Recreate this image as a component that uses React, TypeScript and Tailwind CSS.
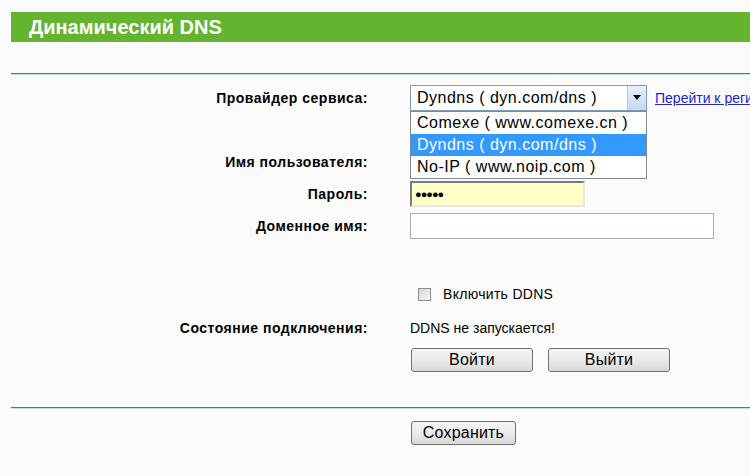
const font = { fontFamily: '"Liberation Sans", Arial, sans-serif' };

const Label = ({ children }: { children: React.ReactNode }) => (
  <div className="w-[368px] shrink-0 text-right text-[14px] font-bold tracking-[0.5px] text-black">{children}</div>
);

const GrayButton = ({ children, className }: { children: React.ReactNode; className?: string }) => (
  <button className={`h-[24px] shrink-0 rounded-[3px] border border-[#707070] bg-gradient-to-b from-[#f4f4f4] via-[#ebebeb] to-[#d8d8d8] text-[16px] leading-none tracking-[0.2px] text-black ${className ?? ""}`}>
    {children}
  </button>
);

const App = () => {
  return (
    <div style={font} className="relative h-[476px] w-[750px] overflow-hidden bg-[#fbfbfb] pt-[12px]">
      {/* Header */}
      <div className="ml-[11px] h-[30px] bg-[#64b42f] pl-[18px] text-[20px] font-bold leading-[30px] text-white">
        Динамический DNS
      </div>
      <div className="ml-[11px] mt-[31px] h-[2px] border-t border-[#4f7f6d] border-b border-b-[#bfe8d6]" />

      {/* Provider */}
      <div className="mt-[10px] flex h-[26px] items-center">
        <Label>Провайдер сервиса:</Label>
        <div className="relative ml-[42px] flex h-[26px] w-[237px] shrink-0 items-center border border-[#7f9db9] bg-white">
          <span className="pl-[6px] text-[16px] tracking-[0.5px] text-black">Dyndns ( dyn.com/dns )</span>
          <div className="absolute right-0 top-0 flex h-[24px] w-[19px] items-start justify-center border-l border-[#b7cce6] bg-gradient-to-b from-[#e8f0fb] to-[#c4d8f0] pt-[9px]">
            <svg width="8" height="5" viewBox="0 0 8 5">
              <path d="M0 0 H8 L4 5 Z" fill="#000" />
            </svg>
          </div>
          {/* open list */}
          <div className="absolute left-[-1px] top-[25px] z-10 w-[237px] border border-[#7a8a9c] bg-white text-[16px] leading-[22px] tracking-[0.5px]">
            <div className="pl-[6px] text-black">Comexe ( www.comexe.cn )</div>
            <div className="bg-[#3399ff] pl-[6px] text-white">Dyndns ( dyn.com/dns )</div>
            <div className="pl-[6px] text-black">No-IP ( www.noip.com )</div>
          </div>
        </div>
        <a className="ml-[8px] shrink-0 whitespace-nowrap text-[14px] text-[#2424cc] underline">Перейти к регистрации...</a>
      </div>

      {/* Username */}
      <div className="mt-[38px] flex h-[26px] items-center">
        <Label>Имя пользователя:</Label>
        <div className="ml-[42px] h-[26px] w-[175px] shrink-0 border border-[#a5acb5] bg-white" />
      </div>

      {/* Password */}
      <div className="mt-[6px] flex h-[26px] items-center">
        <Label>Пароль:</Label>
        <div className="ml-[42px] flex h-[26px] w-[175px] shrink-0 items-center border-2 border-t-[#7a7a7a] border-l-[#7a7a7a] border-r-[#e6e6e6] border-b-[#e6e6e6] bg-[#ffffc8] pl-[3px] text-[11px] font-bold tracking-[-1px] text-black">
          ●●●●●
        </div>
      </div>

      {/* Domain */}
      <div className="mt-[6px] flex h-[26px] items-center">
        <Label>Доменное имя:</Label>
        <div className="ml-[42px] h-[26px] w-[304px] shrink-0 border border-[#a5acb5] bg-white" />
      </div>

      {/* Enable */}
      <div className="mt-[45px] flex h-[20px] items-center">
        <div className="w-[368px] shrink-0" />
        <div className="ml-[50px] h-[13px] w-[13px] shrink-0 border border-[#8f8f8f] bg-gradient-to-br from-[#d4d4d4] to-[#f8f8f8]" />
        <span className="ml-[12px] text-[14px] tracking-[0.3px] text-black">Включить DDNS</span>
      </div>

      {/* Status */}
      <div className="mt-[14px] flex h-[20px] items-center">
        <Label>Состояние подключения:</Label>
        <span className="ml-[42px] text-[14px] text-black">DDNS не запускается!</span>
      </div>

      {/* Login / logout */}
      <div className="mt-[10px] flex items-center">
        <div className="w-[368px] shrink-0" />
        <GrayButton className="ml-[43px] w-[122px]">Войти</GrayButton>
        <GrayButton className="ml-[15px] w-[122px]">Выйти</GrayButton>
      </div>

      <div className="ml-[11px] mt-[35px] h-[2px] border-t border-[#4f7f6d] border-b border-b-[#bfe8d6]" />

      {/* Save */}
      <div className="mt-[12px] flex items-center">
        <div className="w-[368px] shrink-0" />
        <GrayButton className="ml-[43px] w-[105px]">Сохранить</GrayButton>
      </div>
    </div>
  );
};

export default App;
